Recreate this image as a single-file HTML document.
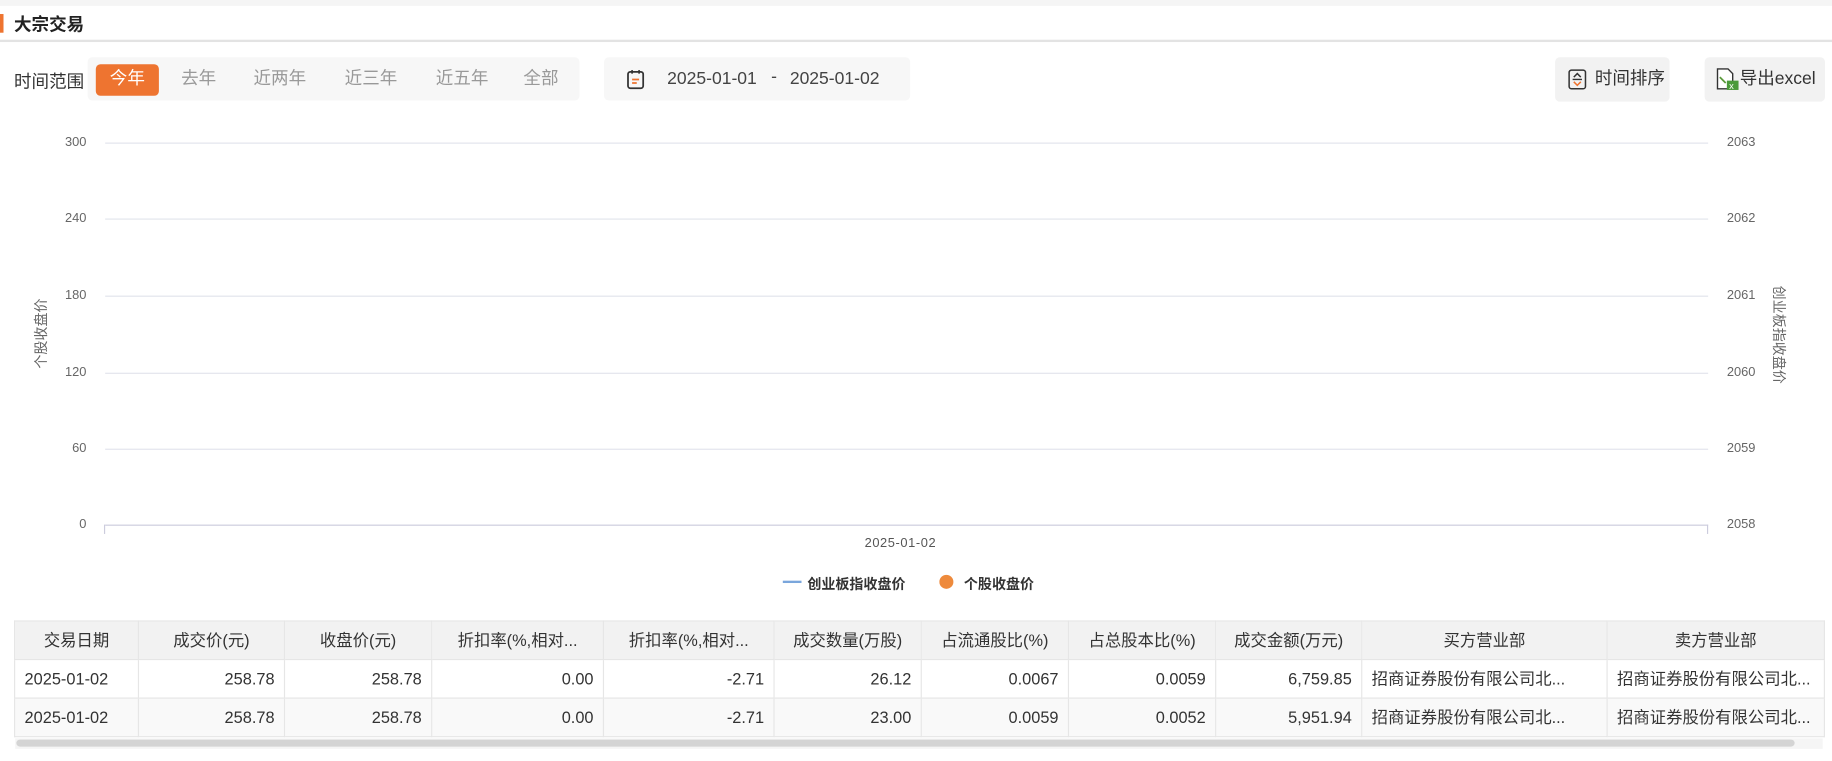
<!DOCTYPE html>
<html><head><meta charset="utf-8"><style>
*{margin:0;padding:0;box-sizing:border-box}
body{width:1832px;height:760px;background:#fff;font-family:"Liberation Sans","Noto Sans CJK SC",sans-serif;overflow:hidden;color:#333}
#w{position:absolute;left:0;top:0;width:1568px;height:651px;transform:scale(1.16837);transform-origin:0 0}
.a{position:absolute}
.top{left:0;top:0;width:1568px;height:5px;background:#f5f5f5}
.title{left:12px;top:10px;font-size:15px;font-weight:bold;color:#222}
.bar{left:0;top:12px;width:3px;height:16px;background:#ee7430}
.hr{left:0;top:34px;width:1568px;height:2px;background:#e3e3e3}
.seg{left:75px;top:49px;width:421px;height:37px;background:#f7f7f7;border-radius:4px}
.btn{position:absolute;top:55px;font-size:15px;color:#999;line-height:26px}
.on{left:82px;width:54px;height:27px;background:#ee7430;color:#fff;border-radius:4px;text-align:center}
.date{left:517px;top:49px;width:262px;height:37px;background:#f7f7f7;border-radius:4px}
.gb{background:#f2f2f2;border-radius:4px;height:38px;top:49px;font-size:15px;line-height:38px;color:#333}
.gl{position:absolute;left:90px;width:1372px;height:1px;background:#e2e4ec}
.yl{position:absolute;font-size:11px;color:#666;text-align:right;width:40px;left:34px}
.yr{position:absolute;font-size:11px;color:#666;left:1478px}
table{position:absolute;left:12px;top:531px;width:1549px;border-collapse:collapse;font-size:14px;table-layout:fixed}
td{border:1px solid #e6e6e6;height:33px;padding:0 8px;white-space:nowrap;overflow:hidden}
tr.h td{background:#f2f2f2;text-align:center;color:#333}
td.r{text-align:right}
tr.z td{background:#f9f9f9}
</style></head><body><div id="w">
<div class="a top"></div>
<div class="a bar"></div>
<div class="a title">大宗交易</div>
<div class="a hr"></div>
<div class="a" style="left:12px;top:59px;font-size:15px">时间范围</div>
<div class="a seg"></div>
<div class="btn on">今年</div>
<div class="btn" style="left:155px">去年</div>
<div class="btn" style="left:217px">近两年</div>
<div class="btn" style="left:295px">近三年</div>
<div class="btn" style="left:373px">近五年</div>
<div class="btn" style="left:448px">全部</div>
<div class="a date"></div>
<svg class="a" style="left:536px;top:59px" width="16" height="18"><rect x="1.5" y="2.5" width="13" height="14" rx="2" fill="none" stroke="#333" stroke-width="1.5"/><line x1="5" y1="1" x2="5" y2="4" stroke="#333" stroke-width="1.5"/><line x1="11" y1="1" x2="11" y2="4" stroke="#333" stroke-width="1.5"/><line x1="5" y1="9" x2="11" y2="9" stroke="#ee7430" stroke-width="1.5"/><line x1="5" y1="12" x2="9" y2="12" stroke="#ee7430" stroke-width="1.5"/></svg>
<div class="a" style="left:571px;top:59px;font-size:15px;color:#444">2025-01-01</div>
<div class="a" style="left:660px;top:57px;font-size:15px;color:#444">-</div>
<div class="a" style="left:676px;top:59px;font-size:15px;color:#444">2025-01-02</div>
<div class="a gb" style="left:1331px;width:98px;padding-left:34px">时间排序</div>
<svg class="a" style="left:1342px;top:59px" width="16" height="18"><rect x="1" y="1" width="14" height="16" rx="2" fill="none" stroke="#333" stroke-width="1.3"/><path d="M5 7 L8 4 L11 7" fill="none" stroke="#333" stroke-width="1.3"/><line x1="4" y1="9" x2="12" y2="9" stroke="#333" stroke-width="1.2"/><path d="M5 11 L8 14 L11 11" fill="none" stroke="#ee7430" stroke-width="1.3"/></svg>
<div class="a gb" style="left:1459px;width:103px;padding-left:30px">导出excel</div>
<svg class="a" style="left:1469px;top:58px" width="20" height="20"><path d="M1 1 H10 L14 5 V18 H1 Z" fill="#fff" stroke="#333" stroke-width="1.2"/><path d="M3 8 L8 13" stroke="#5a9a3a" stroke-width="1.5"/><rect x="9" y="11" width="10" height="8" fill="#4a9a3a"/><text x="11" y="18" font-size="8" fill="#fff" font-family="Liberation Sans">x</text></svg>

<div class="gl" style="top:122px"></div><div class="gl" style="top:187px"></div><div class="gl" style="top:253px"></div><div class="gl" style="top:319px"></div><div class="gl" style="top:384px"></div><div class="gl" style="top:449px;background:#ccd"></div>
<div class="a" style="left:89px;top:449px;width:1px;height:8px;background:#ccd"></div>
<div class="a" style="left:1461px;top:449px;width:1px;height:8px;background:#ccd"></div>
<div class="yl" style="top:116px">300</div><div class="yl" style="top:181px">240</div><div class="yl" style="top:247px">180</div><div class="yl" style="top:313px">120</div><div class="yl" style="top:378px">60</div><div class="yl" style="top:443px">0</div>
<div class="yr" style="top:116px">2063</div><div class="yr" style="top:181px">2062</div><div class="yr" style="top:247px">2061</div><div class="yr" style="top:313px">2060</div><div class="yr" style="top:378px">2059</div><div class="yr" style="top:443px">2058</div>
<div class="a" style="left:5px;top:277px;width:60px;text-align:center;transform:rotate(-90deg);font-size:12px;color:#666">个股收盘价</div>
<div class="a" style="left:1478px;top:278px;width:90px;text-align:center;transform:rotate(90deg);font-size:12px;color:#666">创业板指收盘价</div>
<div class="a" style="left:740px;top:459px;font-size:11px;color:#555;letter-spacing:0.5px">2025-01-02</div>
<div class="a" style="left:670px;top:497px;width:16px;height:2px;background:#7aa6dc"></div>
<div class="a" style="left:691px;top:491px;font-size:12px;font-weight:bold;color:#333">创业板指收盘价</div>
<div class="a" style="left:804px;top:492px;width:12px;height:12px;border-radius:50%;background:#ee8a3c"></div>
<div class="a" style="left:825px;top:491px;font-size:12px;font-weight:bold;color:#333">个股收盘价</div>

<table>
<colgroup><col style="width:106px"><col style="width:125px"><col style="width:126px"><col style="width:147px"><col style="width:146px"><col style="width:126px"><col style="width:126px"><col style="width:126px"><col style="width:125px"><col style="width:210px"><col style="width:186px"></colgroup>
<tr class="h"><td>交易日期</td><td>成交价(元)</td><td>收盘价(元)</td><td>折扣率(%,相对...</td><td>折扣率(%,相对...</td><td>成交数量(万股)</td><td>占流通股比(%)</td><td>占总股本比(%)</td><td>成交金额(万元)</td><td>买方营业部</td><td>卖方营业部</td></tr>
<tr><td>2025-01-02</td><td class="r">258.78</td><td class="r">258.78</td><td class="r">0.00</td><td class="r">-2.71</td><td class="r">26.12</td><td class="r">0.0067</td><td class="r">0.0059</td><td class="r">6,759.85</td><td>招商证券股份有限公司北...</td><td>招商证券股份有限公司北...</td></tr>
<tr class="z"><td>2025-01-02</td><td class="r">258.78</td><td class="r">258.78</td><td class="r">0.00</td><td class="r">-2.71</td><td class="r">23.00</td><td class="r">0.0059</td><td class="r">0.0052</td><td class="r">5,951.94</td><td>招商证券股份有限公司北...</td><td>招商证券股份有限公司北...</td></tr>
</table>
<div class="a" style="left:13px;top:632px;width:1547px;height:9px;background:#f5f5f5"></div>
<div class="a" style="left:14px;top:633px;width:1522px;height:6px;background:#d4d4d4;border-radius:3px"></div>
</div></body></html>
